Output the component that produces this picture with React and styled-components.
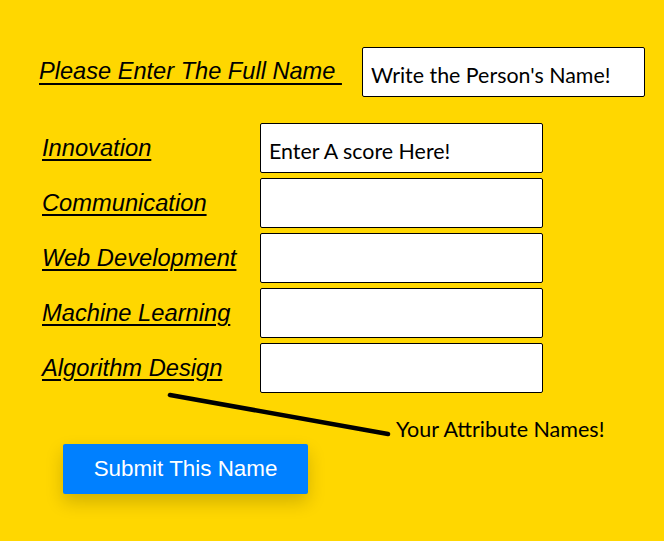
import React from "react";
import styled, { createGlobalStyle } from "styled-components";

const attributes = [
    { name: "Innovation", value: "Enter A score Here!" },
    { name: "Communication", value: "" },
    { name: "Web Development", value: "" },
    { name: "Machine Learning", value: "" },
    { name: "Algorithm Design", value: "" },
];

const App = () => {
    return (
        <Page>
            <GlobalStyle />
            <NameRow>
                <NameLabel>Please Enter The Full Name&nbsp;</NameLabel>
                <TextBox defaultValue="Write the Person's Name!" />
            </NameRow>

            <ScoreList>
                {attributes.map((a) => (
                    <ScoreRow key={a.name}>
                        <AttributeLabel>{a.name}</AttributeLabel>
                        <TextBox defaultValue={a.value} />
                    </ScoreRow>
                ))}
            </ScoreList>

            <Annotation>
                <svg width="226" height="48" viewBox="0 0 226 48">
                    <line x1="4" y1="3" x2="222" y2="42" stroke="#000" strokeWidth="4.5" strokeLinecap="round" />
                </svg>
                <AnnotationText>Your Attribute Names!</AnnotationText>
            </Annotation>

            <SubmitButton>Submit This Name</SubmitButton>
        </Page>
    );
};

export default App;

const GlobalStyle = createGlobalStyle`
  body {
    margin: 0;
    background: #ffd700;
  }
`;

const Page = styled.div`
  min-height: 541px;
  background: #ffd700;
  padding-top: 47px;
  box-sizing: border-box;
`;

const NameRow = styled.div`
  display: flex;
  align-items: center;
  padding-left: 39px;
  gap: 20px;
`;

const NameLabel = styled.label`
  font-family: "Liberation Sans", Arial, sans-serif;
  font-style: italic;
  font-size: 23.6px;
  text-decoration: underline;
  text-underline-offset: 4px;
  text-decoration-thickness: 2px;
  color: #000;
  margin-top: -2px;
`;

const TextBox = styled.input`
  width: 283px;
  height: 50px;
  box-sizing: border-box;
  border: 1px solid #000;
  border-radius: 2px;
  background: #fff;
  padding: 6px 7px 0 8px;
  font-family: "Lato", "Open Sans", sans-serif;
  font-size: 21.4px;
  color: #000;
  outline: none;
`;

const ScoreList = styled.div`
  display: flex;
  flex-direction: column;
  gap: 5px;
  margin-top: 26px;
  padding-left: 42px;
`;

const ScoreRow = styled.div`
  display: grid;
  grid-template-columns: 218px 283px;
  align-items: center;
  height: 50px;
`;

const AttributeLabel = styled.label`
  font-family: "Liberation Sans", Arial, sans-serif;
  font-style: italic;
  font-size: 23.7px;
  text-decoration: underline;
  text-underline-offset: 3px;
  text-decoration-thickness: 2px;
  color: #000;
`;

const Annotation = styled.div`
  display: flex;
  align-items: flex-end;
  padding-left: 166px;
  height: 50px;
  margin-top: -3px;
`;

const AnnotationText = styled.span`
  font-family: "Lato", "Open Sans", sans-serif;
  font-size: 21.5px;
  color: #000;
  margin-left: 4px;
  line-height: 24px;
  margin-bottom: -1px;
`;

const SubmitButton = styled.button`
  display: block;
  margin: 4px 0 0 63px;
  width: 245px;
  height: 50px;
  border: none;
  border-radius: 2px;
  background: #0080ff;
  color: #fff;
  font-family: "Liberation Sans", Arial, sans-serif;
  font-size: 22.4px;
  box-shadow: 0 8px 18px rgba(0, 0, 0, 0.18);
  cursor: pointer;
`;
